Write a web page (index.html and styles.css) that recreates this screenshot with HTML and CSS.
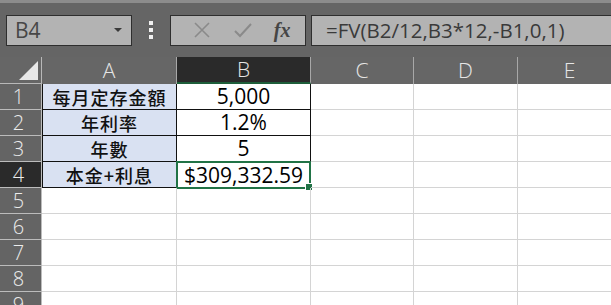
FILE: index.html
```html
<!DOCTYPE html>
<html lang="zh-Hant">
<head>
    <meta charset="UTF-8">
    <title>FV</title>
    <link rel="stylesheet" href="styles.css">
</head>
<body>
    <div class="bar">
        <div class="namebox">
            <span>B4</span>
            <span class="caret"></span>
        </div>
        <div class="dots"><i></i><i></i><i></i></div>
        <div class="btns">
            <svg width="20" height="20" viewBox="0 0 20 20"><path d="M3 3 L17 17 M17 3 L3 17" stroke="#8a8a8a" stroke-width="1.6" fill="none"/></svg>
            <svg width="20" height="20" viewBox="0 0 20 20"><path d="M2 11 L7 16 L18 4" stroke="#8a8a8a" stroke-width="2" fill="none"/></svg>
            <span class="fx">fx</span>
        </div>
        <div class="formula">=FV(B2/12,B3*12,-B1,0,1)</div>
    </div>

    <div class="sheet">
        <div class="hd corner"><span class="tri"></span></div>
        <div class="hd">A</div>
        <div class="hd sel">B</div>
        <div class="hd">C</div>
        <div class="hd">D</div>
        <div class="hd">E</div>

        <div class="rh">1</div>
        <div class="c lab">每月定存金額</div>
        <div class="c val">5,000</div>
        <div class="c"></div><div class="c"></div><div class="c"></div>

        <div class="rh">2</div>
        <div class="c lab">年利率</div>
        <div class="c val">1.2%</div>
        <div class="c"></div><div class="c"></div><div class="c"></div>

        <div class="rh">3</div>
        <div class="c lab">年數</div>
        <div class="c val">5</div>
        <div class="c"></div><div class="c"></div><div class="c"></div>

        <div class="rh rsel">4</div>
        <div class="c lab">本金+利息</div>
        <div class="c val active">$309,332.59<span class="handle"></span></div>
        <div class="c"></div><div class="c"></div><div class="c"></div>

        <div class="rh">5</div>
        <div class="c"></div><div class="c"></div><div class="c"></div><div class="c"></div><div class="c"></div>
        <div class="rh">6</div>
        <div class="c"></div><div class="c"></div><div class="c"></div><div class="c"></div><div class="c"></div>
        <div class="rh">7</div>
        <div class="c"></div><div class="c"></div><div class="c"></div><div class="c"></div><div class="c"></div>
        <div class="rh">8</div>
        <div class="c"></div><div class="c"></div><div class="c"></div><div class="c"></div><div class="c"></div>
        <div class="rh">9</div>
        <div class="c"></div><div class="c"></div><div class="c"></div><div class="c"></div><div class="c"></div>
    </div>
</body>
</html>
```

FILE: styles.css
```css
body {
    margin: 0;
    width: 611px;
    height: 305px;
    overflow: hidden;
    background: #fff;
    font-family: "Open Sans", "Noto Sans CJK TC", sans-serif;
}
.bar {
    height: 54px;
    border-top: 3px solid #8c8c8c;
    background: #656565;
    display: flex;
    align-items: center;
}
.namebox {
    margin-left: 6px;
    width: 126px;
    height: 31px;
    border: 1px solid #2e2e2e;
    background: #b3b3b3;
    display: flex;
    align-items: center;
    justify-content: space-between;
    padding: 0 9px 0 8px;
    box-sizing: border-box;
    color: #474747;
    font-size: 21px;
}
.caret {
    width: 0;
    height: 0;
    border-left: 4px solid transparent;
    border-right: 4px solid transparent;
    border-top: 4px solid #3a3a3a;
}
.dots {
    width: 38px;
    display: flex;
    flex-direction: column;
    align-items: center;
    gap: 3px;
}
.dots i {
    width: 4px;
    height: 4px;
    background: #f0f0f0;
}
.btns {
    width: 136px;
    height: 31px;
    border: 1px solid #2e2e2e;
    background: #b3b3b3;
    box-sizing: border-box;
    display: flex;
    align-items: center;
    justify-content: space-around;
    padding: 0 4px 0 10px;
}
.fx {
    font-family: "Liberation Serif", serif;
    font-style: italic;
    font-weight: bold;
    font-size: 20px;
    color: #454545;
}
.formula {
    margin-left: 5px;
    flex: 1;
    height: 31px;
    border: 1px solid #2e2e2e;
    border-right: none;
    background: #b3b3b3;
    box-sizing: border-box;
    padding-left: 14px;
    font-size: 20.5px;
    line-height: 28px;
    color: #3a3a3a;
}
.sheet {
    display: grid;
    grid-template-columns: 42px 135px 134px 103px 104px 104px;
    grid-template-rows: 27px repeat(9, 26px);
    line-height: 1;
}
.hd {
    background: #666;
    color: #e6e6e6;
    font-size: 21px;
    display: flex;
    align-items: center;
    justify-content: center;
    border-right: 1px solid #a8a8a8;
    box-sizing: border-box;
    font-weight: 300;
}
.hd.sel {
    background: #2a2a2a;
    border-bottom: 2px solid #1e5e3a;
}
.corner {
    position: relative;
    border-right: 1px solid #b8b8b8;
    border-bottom: 1px solid #b8b8b8;
}
.tri {
    position: absolute;
    right: 3px;
    bottom: 3px;
    width: 0;
    height: 0;
    border-left: 19px solid transparent;
    border-bottom: 19px solid #e8e8e8;
}
.rh {
    background: #646464;
    color: #ececec;
    font-size: 20px;
    font-weight: 300;
    display: flex;
    align-items: center;
    justify-content: center;
    padding-right: 4px;
    border-bottom: 1px solid #bcbcbc;
    border-right: 1px solid #bcbcbc;
    box-sizing: border-box;
}
.rh.rsel {
    background: #2a2a2a;
}
.c {
    border-right: 1px solid #d4d4d4;
    border-bottom: 1px solid #d4d4d4;
    box-sizing: border-box;
    display: flex;
    align-items: center;
    justify-content: center;
    font-size: 21px;
    color: #000;
    position: relative;
}
.lab {
    background: #d9e1f2;
    border-right: 1px solid #111;
    border-bottom: 1px solid #111;
    border-left: 1px solid #111;
    font-family: "Noto Sans CJK TC", sans-serif;
    font-weight: 500;
    font-size: 18px;
    letter-spacing: 1px;
    color: #111;
}
.val {
    border-right: 1px solid #111;
    border-bottom: 1px solid #111;
}
.active {
    border: 2px solid #217346;
    margin: -1px 0 -1px -1px;
}
.handle {
    position: absolute;
    right: -4px;
    bottom: -4px;
    width: 6px;
    height: 6px;
    background: #217346;
    border: 1px solid #fff;
}
```
